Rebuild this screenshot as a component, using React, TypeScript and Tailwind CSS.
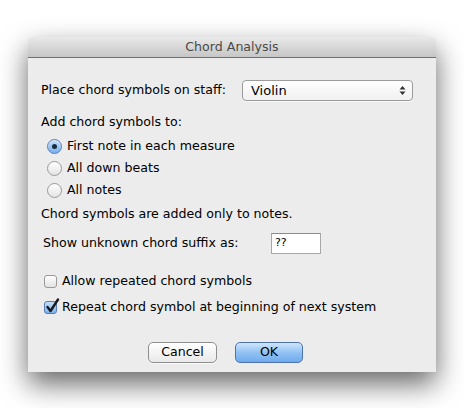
export default function App() {
  const font = { fontFamily: '"DejaVu Sans", "Liberation Sans", sans-serif' };

  const Radio = ({ on }: { on?: boolean }) =>
    on ? (
      <span className="flex h-[15px] w-[15px] items-center justify-center rounded-full border border-[#5a7db5] bg-gradient-to-b from-[#c4def9] to-[#79b1ef] shadow-[inset_0_1px_1px_rgba(255,255,255,0.6)]">
        <span className="h-[5px] w-[5px] rounded-full bg-[#1b2a3d]" />
      </span>
    ) : (
      <span className="h-[15px] w-[15px] rounded-full border border-[#9a9a9a] bg-gradient-to-b from-[#ffffff] to-[#e4e4e4]" />
    );

  return (
    <div className="h-[408px] w-[464px] bg-white pl-[28px] pt-[37px] text-[12.6px] text-black" style={font}>
      <div className="flex h-[335px] w-[408px] flex-col overflow-hidden rounded-t-[5px] bg-[#ececec] shadow-[0_12px_28px_rgba(0,0,0,0.6)]">
        {/* title bar */}
        <div className="flex h-[21px] items-center justify-center border-b border-[#6e6e6e] bg-gradient-to-b from-[#e9e9e9] to-[#c6c6c6] text-[#4a4a4a]">
          Chord Analysis
        </div>

        <div className="flex flex-col pl-[13px]">
          <div className="mt-[22px] flex h-[21px] items-center">
            <span>Place chord symbols on staff:</span>
            <div className="ml-auto mr-[23px] flex h-[21px] w-[171px] items-center rounded-[4px] border border-[#9c9c9c] bg-gradient-to-b from-[#ffffff] to-[#f0f0f0] pl-[8px] pr-[6px] text-[13px] shadow-[0_1px_0_rgba(255,255,255,0.6)]">
              <span>Violin</span>
              <svg className="ml-auto" width="7" height="11" viewBox="0 0 7 11">
                <path d="M3.5 1 L6.5 4.5 L0.5 4.5 Z" fill="#333" />
                <path d="M3.5 10 L6.5 6.5 L0.5 6.5 Z" fill="#333" />
              </svg>
            </div>
          </div>

          <div className="mt-[13px] flex h-[16px] items-center">Add chord symbols to:</div>

          <div className="mt-[5px] flex flex-col pl-[6px]">
            <div className="flex h-[22px] items-center gap-[5px]">
              <Radio on />
              <span>First note in each measure</span>
            </div>
            <div className="flex h-[22px] items-center gap-[5px]">
              <Radio />
              <span>All down beats</span>
            </div>
            <div className="flex h-[22px] items-center gap-[5px]">
              <Radio />
              <span>All notes</span>
            </div>
          </div>

          <div className="mt-[5px] flex h-[16px] items-center">Chord symbols are added only to notes.</div>

          <div className="mt-[11px] flex h-[21px] items-center pl-[2px]">
            <span>Show unknown chord suffix as:</span>
            <div className="ml-auto mr-[115px] flex h-[21px] w-[50px] items-center border border-[#a8a8a8] border-t-[#8c8c8c] bg-white pl-[3px] text-[11px]">
              ??
            </div>
          </div>

          <div className="mt-[17px] flex h-[20px] items-center gap-[5px] pl-[3px]">
            <span className="h-[13px] w-[13px] rounded-[3px] border border-[#9a9a9a] bg-gradient-to-b from-[#ffffff] to-[#e2e2e2]" />
            <span>Allow repeated chord symbols</span>
          </div>
          <div className="mt-[6px] flex h-[20px] items-center gap-[5px] pl-[3px]">
            <span className="relative h-[13px] w-[13px] rounded-[3px] border border-[#5a7db5] bg-gradient-to-b from-[#c4def9] to-[#79b1ef]">
              <svg className="absolute -top-[4px] left-[0px]" width="15" height="16" viewBox="0 0 15 16">
                <path d="M2.5 9 L5.5 13 L13 1.5" fill="none" stroke="#1a1a1a" strokeWidth="2.4" strokeLinecap="round" strokeLinejoin="round" />
              </svg>
            </span>
            <span>Repeat chord symbol at beginning of next system</span>
          </div>

          <div className="mt-[25px] flex items-center pl-[107px]">
            <button className="flex h-[21px] w-[69px] items-center justify-center rounded-[5px] border border-[#8e8e8e] bg-gradient-to-b from-[#ffffff] to-[#e9e9e9] shadow-[0_1px_0_rgba(255,255,255,0.7)]">
              Cancel
            </button>
            <button className="ml-[18px] flex h-[21px] w-[68px] items-center justify-center rounded-[5px] border border-[#4f74ad] bg-gradient-to-b from-[#cfe5fb] via-[#92c2f4] to-[#6faaee]">
              OK
            </button>
          </div>
        </div>
      </div>
    </div>
  );
}
